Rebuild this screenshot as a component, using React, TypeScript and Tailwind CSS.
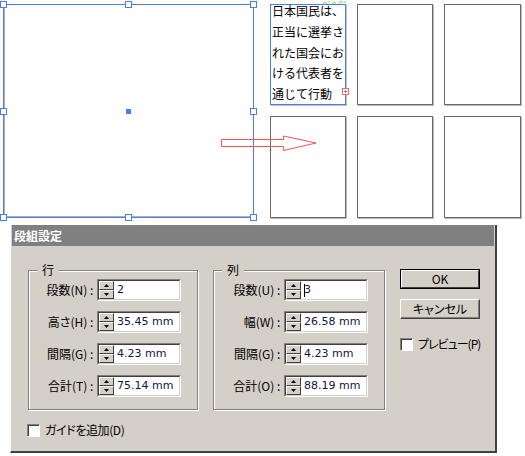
import React from 'react'

const lines = ['日本国民は、', '正当に選挙さ', 'れた国会にお', 'ける代表者を', '通じて行動']

const rowFields = [
  { label: '段数(N) : ', value: '2' },
  { label: '高さ(H) : ', value: '35.45 mm' },
  { label: '間隔(G) : ', value: '4.23 mm' },
  { label: '合計(T) : ', value: '75.14 mm' },
]

const colFields = [
  { label: '段数(U) : ', value: '3', caret: true },
  { label: '幅(W) : ', value: '26.58 mm' },
  { label: '間隔(G) : ', value: '4.23 mm' },
  { label: '合計(O) : ', value: '88.19 mm' },
]

function Handle({ className }: { className: string }) {
  return <div className={`absolute w-[7px] h-[7px] bg-white border border-[#4a7cf0] ${className}`} />
}

function SpinButton({ down }: { down?: boolean }) {
  return (
    <div className="h-[9px] flex items-center justify-center bg-[#d4d0c8] border border-t-white border-l-white border-r-[#404040] border-b-[#404040]">
      <svg width="5" height="3" viewBox="0 0 5 3">
        <path d={down ? 'M0 0H5L2.5 3Z' : 'M2.5 0L5 3H0Z'} fill="#000" />
      </svg>
    </div>
  )
}

function Field({ label, value, caret }: { label: string; value: string; caret?: boolean }) {
  return (
    <div className="flex items-center h-[22px]">
      <span className="whitespace-pre text-[12px] leading-[16px] text-black mr-[1px]">{label}</span>
      <div className="w-[84px] h-[22px] flex border border-t-[#808080] border-l-[#808080] border-r-white border-b-white">
        <div className="flex-1 flex border border-t-[#404040] border-l-[#404040] border-r-[#d4d0c8] border-b-[#d4d0c8]">
          <div className="w-[15px] flex flex-col">
            <SpinButton />
            <SpinButton down />
          </div>
          <div className="flex-1 bg-white flex items-center pl-[3px] font-['DejaVu_Sans',sans-serif] text-[11px] leading-[14px] text-[#141440]">
            {caret && <span className="w-px h-[13px] bg-black mr-[-1px]" />}
            {value}
          </div>
        </div>
      </div>
    </div>
  )
}

function Group({ title, fields, width }: { title: string; fields: typeof colFields; width: string }) {
  return (
    <div className={`${width} h-[140px] flex flex-col border border-[#808080] shadow-[inset_1px_1px_0_#fff,1px_1px_0_#fff]`}>
      <span className="self-start ml-[8px] -mt-[9px] px-[5px] bg-[#d4d0c8] text-[12px] leading-[16px]">{title}</span>
      <div className="mt-[1px] pr-[16px] flex flex-col items-end gap-[10px]">
        {fields.map((f) => (
          <Field key={f.label} {...f} />
        ))}
      </div>
    </div>
  )
}

function Checkbox({ label, tight }: { label: string; tight?: string }) {
  return (
    <div className="flex items-center gap-[5px]">
      <div className="w-[13px] h-[13px] bg-white border border-t-[#808080] border-l-[#808080] border-r-white border-b-white shadow-[inset_1px_1px_0_#404040]" />
      <span className={`text-[12px] leading-[16px] ${tight ?? ''}`}>{label}</span>
    </div>
  )
}

export default function App() {
  return (
    <div className="w-[525px] h-[456px] bg-white overflow-hidden font-['Noto_Sans_CJK_JP',sans-serif]">
      <div className="relative h-[225px] flex items-start">
        <div className="relative ml-[3px] mt-[4px] w-[251px] h-[214px] border border-[#4a7cf0] shadow-[inset_1px_-1px_0_#b0b0b0]">
          <Handle className="-left-[4px] -top-[4px]" />
          <Handle className="left-[121px] -top-[4px]" />
          <Handle className="-right-[4px] -top-[4px]" />
          <Handle className="-left-[4px] top-[103px]" />
          <Handle className="-right-[4px] top-[103px]" />
          <Handle className="-left-[4px] -bottom-[4px]" />
          <Handle className="left-[121px] -bottom-[4px]" />
          <Handle className="-right-[4px] -bottom-[4px]" />
          <div className="absolute left-[122px] top-[104px] w-[5px] h-[5px] bg-[#4a7cf0]" />
        </div>

        <div className="ml-[16px] mt-[4px] grid grid-cols-[76px_76px_77px] grid-rows-[101px_102px] gap-[11px]">
          <div className="relative border border-[#4a7cf0] shadow-[1px_1px_0_#c0c0c0]">
            <div className="-mt-[4px] pl-px text-[12px] leading-[20.8px] text-black whitespace-nowrap">
              {lines.map((l) => (
                <div key={l}>{l}</div>
              ))}
            </div>
            <svg className="absolute -right-[4px] top-[83px]" width="7" height="7" viewBox="0 0 7 7">
              <rect x="0.5" y="0.5" width="6" height="6" fill="white" stroke="#f06868" />
              <path d="M2 3.5H5M3.5 2V5" stroke="#f06868" strokeWidth="1" />
            </svg>
            <svg className="absolute left-[52px] -top-[5px]" width="24" height="5" viewBox="0 0 24 5">
              <path d="M0 4L2 2L4 4M5 2H7M9 4L11 2L13 4M16 4L18 1L20 3M21 2H23" stroke="#7ad86a" strokeWidth="1" fill="none" />
            </svg>
          </div>
          {[0, 1, 2, 3, 4].map((i) => (
            <div key={i} className="border border-[#6a6a6a] shadow-[1px_1px_0_#b8b8b8]" />
          ))}
        </div>

        <svg className="absolute left-[220px] top-[134px]" width="100" height="20" viewBox="0 0 100 20">
          <path d="M1.5 5.5H63.5V2L96 9L63.5 16.5V12.5H1.5Z" fill="none" stroke="#f25454" strokeWidth="1" />
        </svg>
      </div>

      <div className="ml-[10px] w-[487px] h-[228px] bg-[#d4d0c8] border-l border-l-white border-r-2 border-r-[#404040] border-b-2 border-b-[#404040] pl-px flex flex-col [font-feature-settings:'palt']">
        <div className="h-[21px] mr-px bg-[#808080] flex items-center pl-[2px]">
          <span className="text-white font-bold text-[12px] leading-[16px]">段組設定</span>
        </div>
        <div className="flex pl-[16px] pt-[24px]">
          <div className="flex flex-col">
            <div className="flex gap-[15px]">
              <Group title="行" fields={rowFields} width="w-[170px]" />
              <Group title="列" fields={colFields} width="w-[172px]" />
            </div>
            <div className="mt-[12px] -ml-px">
              <Checkbox label="ガイドを追加(D)" tight="tracking-[-0.4px]" />
            </div>
          </div>
          <div className="ml-[15px] -mt-px flex flex-col">
            <button className="w-[80px] h-[20px] border border-black bg-[#d4d0c8] flex">
              <span className="flex-1 flex items-center justify-center border border-t-white border-l-white border-r-[#404040] border-b-[#404040] text-[12px] leading-[16px]">OK</span>
            </button>
            <button className="mt-[10px] w-[80px] h-[20px] bg-[#d4d0c8] flex items-center justify-center border border-t-white border-l-white border-r-[#404040] border-b-[#404040] shadow-[inset_-1px_-1px_0_#808080] text-[12px] leading-[16px]">
              キャンセル
            </button>
            <div className="mt-[17px]">
              <Checkbox label="プレビュー(P)" tight="tracking-[-1px]" />
            </div>
          </div>
        </div>
      </div>
    </div>
  )
}
